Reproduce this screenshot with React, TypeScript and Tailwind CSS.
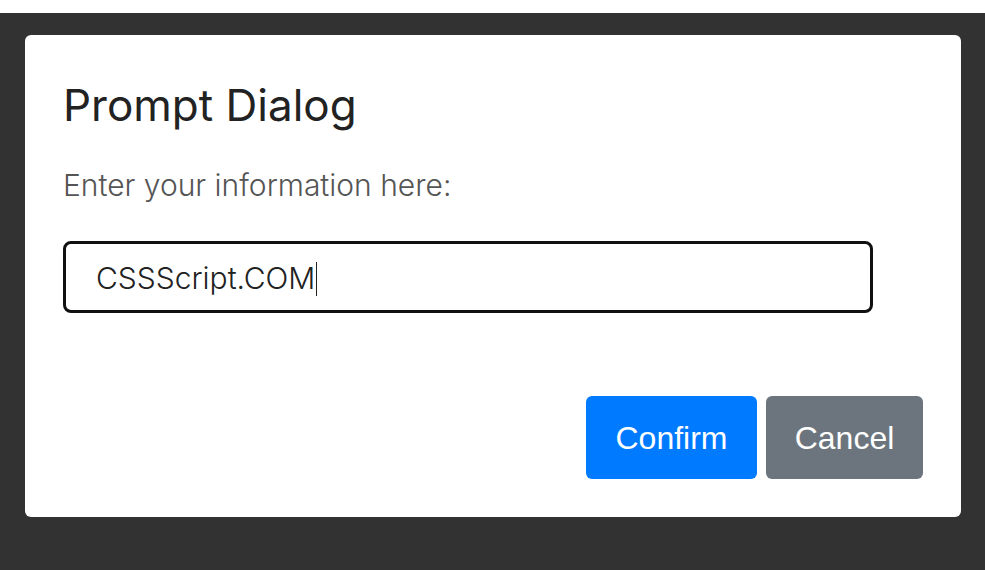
export default function App() {
  return (
    <div className="min-h-screen bg-white pt-[13px]">
      <div className="h-[557px] bg-[#323232] pl-[25px] pr-[24px] pt-[22px]">
        <div className="h-[482px] rounded-[6px] bg-white px-[38px] pt-[40px] pb-[38px] flex flex-col">
          <h2 className="font-['Inter',sans-serif] text-[44px] leading-[60px] text-[#222] font-normal">
            Prompt Dialog
          </h2>
          <p className="mt-[30px] font-['Inter',sans-serif] text-[30px] leading-[40px] font-light text-[#555]">
            Enter your information here:
          </p>
          <div className="mt-[36px] w-[810px] h-[72px] rounded-[8px] border-[3px] border-[#111] flex items-center pl-[30px] pt-[3px]">
            <span className="font-['Inter',sans-serif] text-[30px] font-light text-[#222]">CSSScript.COM</span>
            <span className="ml-[1px] h-[34px] w-[1px] bg-[#222]" />
          </div>
          <div className="mt-auto flex justify-end gap-[9px]">
            <button className="h-[83px] w-[171px] rounded-[6px] bg-[#007bff] text-white text-[32px] font-['Liberation_Sans',Arial,sans-serif]">
              Confirm
            </button>
            <button className="h-[83px] w-[157px] rounded-[6px] bg-[#6c757d] text-white text-[32px] font-['Liberation_Sans',Arial,sans-serif]">
              Cancel
            </button>
          </div>
        </div>
      </div>
    </div>
  );
}
